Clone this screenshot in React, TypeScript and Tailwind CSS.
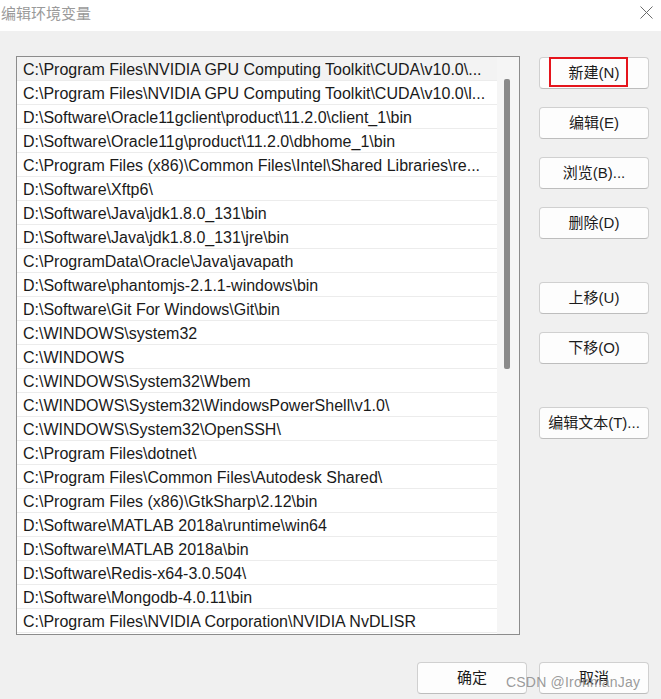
import React from 'react'

const paths = [
  'C:\\Program Files\\NVIDIA GPU Computing Toolkit\\CUDA\\v10.0\\...',
  'C:\\Program Files\\NVIDIA GPU Computing Toolkit\\CUDA\\v10.0\\l...',
  'D:\\Software\\Oracle11gclient\\product\\11.2.0\\client_1\\bin',
  'D:\\Software\\Oracle11g\\product\\11.2.0\\dbhome_1\\bin',
  'C:\\Program Files (x86)\\Common Files\\Intel\\Shared Libraries\\re...',
  'D:\\Software\\Xftp6\\',
  'D:\\Software\\Java\\jdk1.8.0_131\\bin',
  'D:\\Software\\Java\\jdk1.8.0_131\\jre\\bin',
  'C:\\ProgramData\\Oracle\\Java\\javapath',
  'D:\\Software\\phantomjs-2.1.1-windows\\bin',
  'D:\\Software\\Git For Windows\\Git\\bin',
  'C:\\WINDOWS\\system32',
  'C:\\WINDOWS',
  'C:\\WINDOWS\\System32\\Wbem',
  'C:\\WINDOWS\\System32\\WindowsPowerShell\\v1.0\\',
  'C:\\WINDOWS\\System32\\OpenSSH\\',
  'C:\\Program Files\\dotnet\\',
  'C:\\Program Files\\Common Files\\Autodesk Shared\\',
  'C:\\Program Files (x86)\\GtkSharp\\2.12\\bin',
  'D:\\Software\\MATLAB 2018a\\runtime\\win64',
  'D:\\Software\\MATLAB 2018a\\bin',
  'D:\\Software\\Redis-x64-3.0.504\\',
  'D:\\Software\\Mongodb-4.0.11\\bin',
  'C:\\Program Files\\NVIDIA Corporation\\NVIDIA NvDLISR',
]

const font = { fontFamily: '"Liberation Sans", "Noto Sans CJK SC", sans-serif' }

function WinButton({ label, className = '' }: { label: string; className?: string }) {
  return (
    <div
      className={`w-[110px] h-[32px] flex items-center justify-center rounded-[4px] border border-[#d0d0d0] border-b-[#bdbdbd] bg-[#fdfdfd] text-[15px] text-[#1b1b1b] ${className}`}
    >
      {label}
    </div>
  )
}

export default function App() {
  return (
    <div className="relative w-[661px] h-[699px] bg-[#f0f0f0] overflow-hidden" style={font}>
      {/* Title bar */}
      <div className="h-[31px] bg-white flex items-start justify-between pl-[1px] pr-[8px] pt-[6px]">
        <span className="text-[15px] text-[#9a9a9a] leading-[15px]">编辑环境变量</span>
        <svg width="13" height="13" viewBox="0 0 13 13">
          <path d="M0.5 0.5 L12.5 12.5 M12.5 0.5 L0.5 12.5" stroke="#6b6b6b" strokeWidth="1" />
        </svg>
      </div>

      {/* Body */}
      <div className="flex pl-[16px] pt-[25px]">
        {/* List */}
        <div className="w-[504px] h-[579px] border border-[#8c8c8c] bg-white flex">
          <div className="w-[480px] flex flex-col">
            {paths.map((p, i) => (
              <div
                key={i}
                className={`h-[24px] shrink-0 border-b border-[#ececec] flex items-center pl-[6px] pt-[3px] text-[16px] leading-[20px] text-[#1a1a1a] whitespace-nowrap overflow-hidden ${
                  i === 0 ? 'bg-[#f3f3f3]' : ''
                }`}
              >
                {p}
              </div>
            ))}
          </div>
          {/* Scrollbar */}
          <div className="flex-1 bg-[#f5f5f5] flex justify-center pt-[22px] pr-[3px]">
            <div className="w-[6px] h-[290px] bg-[#8a8a8a] rounded-[2px]" />
          </div>
        </div>

        {/* Right buttons */}
        <div className="ml-[19px] pt-[1px] flex flex-col">
          <div className="relative">
            <WinButton label="新建(N)" />
            <div className="absolute left-[10px] top-0 w-[79px] h-[30px] border-2 border-[#e5141c]" />
          </div>
          <WinButton label="编辑(E)" className="mt-[18px]" />
          <WinButton label="浏览(B)..." className="mt-[18px]" />
          <WinButton label="删除(D)" className="mt-[18px]" />
          <WinButton label="上移(U)" className="mt-[43px]" />
          <WinButton label="下移(O)" className="mt-[18px]" />
          <WinButton label="编辑文本(T)..." className="mt-[43px]" />
        </div>
      </div>

      {/* Footer buttons */}
      <div className="flex justify-end gap-[12px] pr-[12px] mt-[27px]">
        <WinButton label="确定" />
        <WinButton label="取消" />
      </div>

      {/* Watermark */}
      <div className="absolute left-[506px] top-[672px] text-[14px] text-[#8f8f8f]/90 tracking-[0.2px]">
        CSDN @IronmanJay
      </div>
    </div>
  )
}
